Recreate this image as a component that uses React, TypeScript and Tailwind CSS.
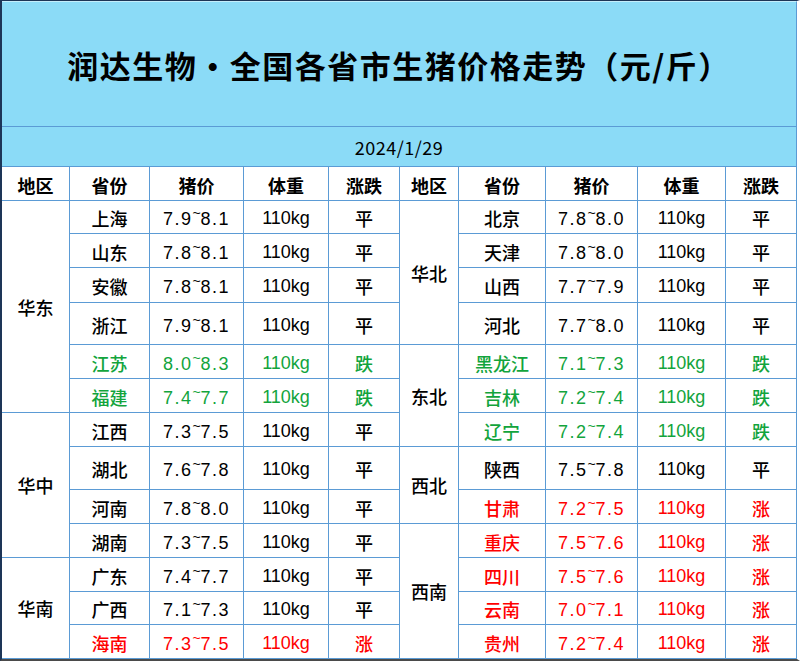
type Tone = 'flat' | 'down' | 'up';

type Row = {
    province: string;
    lo: string;
    hi: string;
    tone: Tone;
};

type Region = {
    name: string;
    place: string;
};

const toneClass: Record<Tone, string> = {
    flat: 'text-black',
    down: 'text-[#12a43c]',
    up: 'text-[#ff0000]',
};

const toneLabel: Record<Tone, string> = {
    flat: '平',
    down: '跌',
    up: '涨',
};

const leftRows: Row[] = [
    { province: '上海', lo: '7.9', hi: '8.1', tone: 'flat' },
    { province: '山东', lo: '7.8', hi: '8.1', tone: 'flat' },
    { province: '安徽', lo: '7.8', hi: '8.1', tone: 'flat' },
    { province: '浙江', lo: '7.9', hi: '8.1', tone: 'flat' },
    { province: '江苏', lo: '8.0', hi: '8.3', tone: 'down' },
    { province: '福建', lo: '7.4', hi: '7.7', tone: 'down' },
    { province: '江西', lo: '7.3', hi: '7.5', tone: 'flat' },
    { province: '湖北', lo: '7.6', hi: '7.8', tone: 'flat' },
    { province: '河南', lo: '7.8', hi: '8.0', tone: 'flat' },
    { province: '湖南', lo: '7.3', hi: '7.5', tone: 'flat' },
    { province: '广东', lo: '7.4', hi: '7.7', tone: 'flat' },
    { province: '广西', lo: '7.1', hi: '7.3', tone: 'flat' },
    { province: '海南', lo: '7.3', hi: '7.5', tone: 'up' },
];

const rightRows: Row[] = [
    { province: '北京', lo: '7.8', hi: '8.0', tone: 'flat' },
    { province: '天津', lo: '7.8', hi: '8.0', tone: 'flat' },
    { province: '山西', lo: '7.7', hi: '7.9', tone: 'flat' },
    { province: '河北', lo: '7.7', hi: '8.0', tone: 'flat' },
    { province: '黑龙江', lo: '7.1', hi: '7.3', tone: 'down' },
    { province: '吉林', lo: '7.2', hi: '7.4', tone: 'down' },
    { province: '辽宁', lo: '7.2', hi: '7.4', tone: 'down' },
    { province: '陕西', lo: '7.5', hi: '7.8', tone: 'flat' },
    { province: '甘肃', lo: '7.2', hi: '7.5', tone: 'up' },
    { province: '重庆', lo: '7.5', hi: '7.6', tone: 'up' },
    { province: '四川', lo: '7.5', hi: '7.6', tone: 'up' },
    { province: '云南', lo: '7.0', hi: '7.1', tone: 'up' },
    { province: '贵州', lo: '7.2', hi: '7.4', tone: 'up' },
];

// grid placement written out in full so tailwind picks it up
const leftRegions: Region[] = [
    { name: '华东', place: 'col-start-1 row-start-2 row-span-6' },
    { name: '华中', place: 'col-start-1 row-start-8 row-span-4' },
    { name: '华南', place: 'col-start-1 row-start-12 row-span-3' },
];

const rightRegions: Region[] = [
    { name: '华北', place: 'col-start-6 row-start-2 row-span-4' },
    { name: '东北', place: 'col-start-6 row-start-6 row-span-3' },
    { name: '西北', place: 'col-start-6 row-start-9 row-span-2' },
    { name: '西南', place: 'col-start-6 row-start-11 row-span-4' },
];

const rowStarts = [
    'row-start-2', 'row-start-3', 'row-start-4', 'row-start-5', 'row-start-6',
    'row-start-7', 'row-start-8', 'row-start-9', 'row-start-10', 'row-start-11',
    'row-start-12', 'row-start-13', 'row-start-14',
];

const leftCols = ['col-start-2', 'col-start-3', 'col-start-4', 'col-start-5'];
const rightCols = ['col-start-7', 'col-start-8', 'col-start-9', 'col-start-10'];
const leftHeadCols = ['col-start-1', 'col-start-2', 'col-start-3', 'col-start-4', 'col-start-5'];
const rightHeadCols = ['col-start-6', 'col-start-7', 'col-start-8', 'col-start-9', 'col-start-10'];

const headers = ['地区', '省份', '猪价', '体重', '涨跌'];

const cjk = "font-['Noto_Sans_CJK_SC',sans-serif]";
const latin = "font-['Liberation_Sans','Noto_Sans_CJK_SC',sans-serif]";

function Cell({ className, children }: { className: string; children: React.ReactNode }) {
    return (
        <div className={`flex items-center justify-center bg-white text-[18px] leading-none ${className}`}>
            {children}
        </div>
    );
}

function Side({ rows, cols }: { rows: Row[]; cols: string[] }) {
    return (
        <>
            {rows.map((row, i) => {
                const color = toneClass[row.tone];
                const rs = rowStarts[i];
                return (
                    <div key={row.province} className="contents">
                        <Cell className={`${cols[0]} ${rs} ${color} ${cjk} font-medium pt-[2px]`}>
                            {row.province}
                        </Cell>
                        <Cell className={`${cols[1]} ${rs} ${color} ${latin} tracking-[1.5px]`}>
                            <span>
                                {row.lo}
                                <span className="align-super text-[14px] tracking-normal">~</span>
                                {row.hi}
                            </span>
                        </Cell>
                        <Cell className={`${cols[2]} ${rs} ${color} ${latin} pt-[2px]`}>
                            110kg
                        </Cell>
                        <Cell className={`${cols[3]} ${rs} ${color} ${cjk} font-medium pt-[2px]`}>
                            {toneLabel[row.tone]}
                        </Cell>
                    </div>
                );
            })}
        </>
    );
}

export default function App() {
    return (
        <div className="w-[800px] h-[661px] bg-white border-t border-l-2 border-b-2 border-r-[3px] border-t-[#1d3557] border-l-[#1d3557] border-b-[#4a4a4a] border-r-white">
            {/* Title */}
            <div className="h-[126px] bg-[#8bdbf7] border-b border-r border-[#5b9bd5] border-t border-t-[#c4eefc] flex items-center justify-center">
                <h1 className={`${cjk} font-bold text-[31px] tracking-[1.5px] text-black leading-none`}>
                    润达生物·全国各省市生猪价格走势（元/斤）
                </h1>
            </div>

            {/* Date */}
            <div className="h-[40px] bg-[#8bdbf7] border-b border-r border-[#5b9bd5] flex items-center justify-center">
                <span className={`${cjk} text-[18px] tracking-[0.5px] text-black leading-none`}>2024/1/29</span>
            </div>

            {/* Table */}
            <div className="grid gap-px bg-[#5b9bd5] border-b border-r border-[#5b9bd5] grid-cols-[67px_79px_93px_84px_70px_58px_86px_91px_87px_70px] grid-rows-[33px_32px_33px_34px_41px_33px_33px_33px_42px_33px_33px_33px_32px_33px]">
                {headers.map((h, i) => (
                    <Cell key={`l-${h}`} className={`${leftHeadCols[i]} row-start-1 ${cjk} font-bold text-black pt-[2px]`}>
                        {h}
                    </Cell>
                ))}
                {headers.map((h, i) => (
                    <Cell key={`r-${h}`} className={`${rightHeadCols[i]} row-start-1 ${cjk} font-bold text-black pt-[2px]`}>
                        {h}
                    </Cell>
                ))}

                {leftRegions.map(r => (
                    <Cell key={r.name} className={`${r.place} ${cjk} font-medium text-black`}>
                        {r.name}
                    </Cell>
                ))}
                {rightRegions.map(r => (
                    <Cell key={r.name} className={`${r.place} ${cjk} font-medium text-black`}>
                        {r.name}
                    </Cell>
                ))}

                <Side rows={leftRows} cols={leftCols} />
                <Side rows={rightRows} cols={rightCols} />
            </div>
        </div>
    );
}
